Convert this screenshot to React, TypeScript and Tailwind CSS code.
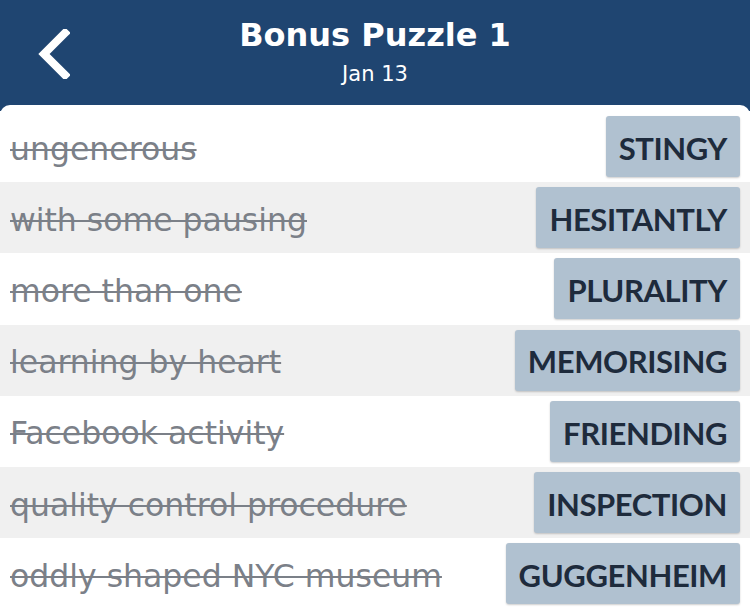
import React from "react";

const rows = [
  ["ungenerous", "STINGY"],
  ["with some pausing", "HESITANTLY"],
  ["more than one", "PLURALITY"],
  ["learning by heart", "MEMORISING"],
  ["Facebook activity", "FRIENDING"],
  ["quality control procedure", "INSPECTION"],
  ["oddly shaped NYC museum", "GUGGENHEIM"],
];

export default function App() {
  return (
    <div className="w-[750px] h-[608px] overflow-hidden bg-[#1f4571]" style={{ fontFamily: "'DejaVu Sans', sans-serif" }}>
      <div className="relative h-[105px] flex flex-col items-center text-white">
        <svg className="absolute left-[36px] top-[29px]" width="34" height="50" viewBox="0 0 34 50">
          <path d="M29 4 L8 25 L29 46" fill="none" stroke="white" strokeWidth="8" strokeLinecap="square" />
        </svg>
        <div className="mt-[15px] text-[32px] font-bold leading-[40px]">Bonus Puzzle 1</div>
        <div className="text-[21px] leading-[26px] mt-[6px]">Jan 13</div>
      </div>
      <div className="bg-white rounded-t-[10px] pt-[6px] h-[503px]">
        {rows.map(([clue, ans], i) => (
          <div
            key={i}
            className={`h-[71.2px] flex items-center justify-between pl-[10px] pr-[10px] ${i % 2 === 1 ? "bg-[#f0f0f0]" : "bg-white"}`}
          >
            <span className="text-[31.5px] leading-[40px] text-[#7b8088] line-through decoration-[2px] pt-[4px]">{clue}</span>
            <span
              className="h-[61px] flex items-center px-[13px] pt-[3px] bg-[#b0c1d0] rounded-[3px] shadow-[0_1px_2px_rgba(0,0,0,0.2)] text-[31px] tracking-[-0.4px] font-bold text-[#1e2b3c]"
              style={{ fontFamily: "Lato, sans-serif" }}
            >
              {ans}
            </span>
          </div>
        ))}
      </div>
    </div>
  );
}
